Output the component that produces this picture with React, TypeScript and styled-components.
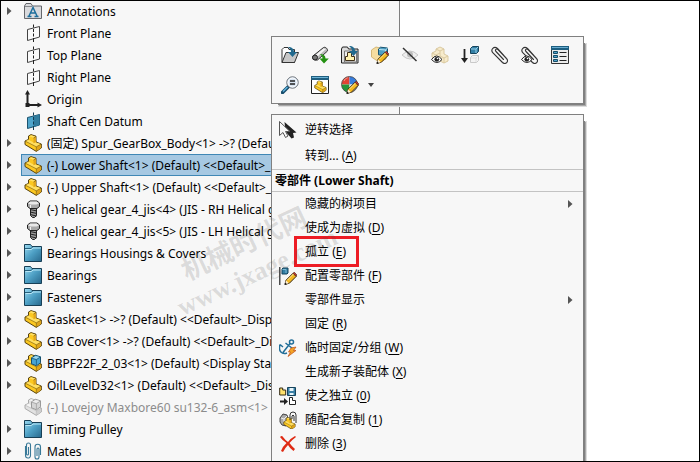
import React from "react";
import styled, { createGlobalStyle } from "styled-components";

const GlobalStyle = createGlobalStyle`
  * { box-sizing: border-box; }
  body {
    margin: 0;
    background: #fff;
    color: #000;
    font-family: "Noto Sans", "Noto Sans CJK SC", sans-serif;
    font-size: 12px;
    line-height: 22px;
  }
  button {
    margin: 0;
    padding: 0;
    border: 0;
    background: none;
    color: inherit;
    font: inherit;
  }
  ul { margin: 0; padding: 0; list-style: none; }
`;

const Workspace = styled.main`
  position: relative;
  display: grid;
  grid-template-columns: 4fr 3fr;
  height: 100vh;
  overflow: hidden;
  background: #fff;
  &::after {
    content: "";
    position: absolute;
    inset: 0;
    z-index: 5;
    border: 1px solid #000;
    pointer-events: none;
  }
`;

const TreePanel = styled.nav`
  min-width: 0;
  overflow: hidden;
  background: #f7f7f7;
  border-right: 1px solid #808080;
  padding-left: 3px;
`;

const TreeRow = styled.li`
  display: flex;
  height: 22px;
  align-items: center;
`;

const Expander = styled.button`
  display: flex;
  flex: none;
  width: 18px;
  height: 22px;
  align-items: center;
  padding-left: 4px;
`;

const Node = styled.div<{ $selected?: boolean; $muted?: boolean }>`
  display: flex;
  flex: 1;
  min-width: 0;
  height: 22px;
  align-items: center;
  gap: 5px;
  padding-left: 2px;
  border: 1px solid ${(p) => (p.$selected ? "#3f87b5" : "transparent")};
  background: ${(p) => (p.$selected ? "#a6c8e2" : "transparent")};
  color: ${(p) => (p.$muted ? "#8c8c8c" : "#000")};
`;

const NodeLabel = styled.span`
  padding-top: 2px;
  white-space: nowrap;
`;

const Popup = styled.div`
  position: absolute;
  left: 271px;
  width: 313px;
  background: #f7f7f7;
  border: 1px solid #808080;
  box-shadow: 4px 4px 0 -3px #808080, 5px 5px 0 -3px #a8a8a8, 5px 5px 0 -2px #dcdcdc;
`;

const Toolbar = styled(Popup)`
  top: 36px;
  display: flex;
  flex-wrap: wrap;
  padding: 3px;
`;

const ToolButton = styled.button<{ $narrow?: boolean }>`
  display: flex;
  width: ${(p) => (p.$narrow ? "12px" : "30px")};
  height: 30px;
  align-items: center;
  justify-content: center;
`;

const Menu = styled(Popup)`
  top: 114px;
  padding: 2px 0 12px;
`;

const MenuItem = styled.button<{ $tall?: boolean }>`
  position: relative;
  display: grid;
  grid-template-columns: 18px 1fr 5px;
  column-gap: 8px;
  width: 100%;
  height: ${(p) => (p.$tall ? "26px" : "24px")};
  align-items: center;
  padding: 0 10px 0 7px;
  text-align: left;
`;

const MenuHeading = styled.h2`
  margin: 0;
  padding-left: 3px;
  border: solid #c3c3c3;
  border-width: 1px 0;
  font-size: 12px;
  line-height: 21px;
`;

const IconSlot = styled.span`
  display: flex;
`;

const Key = styled.u`
  text-underline-offset: 2px;
`;

const Highlight = styled.span`
  position: absolute;
  left: 22px;
  top: -4px;
  width: 65px;
  height: 31px;
  border: 3px solid #ed1c24;
  pointer-events: none;
`;

const Watermark = styled.div`
  position: absolute;
  left: 164px;
  top: 226px;
  z-index: 4;
  color: rgba(70, 70, 70, 0.16);
  font-size: 27px;
  font-weight: 700;
  line-height: 32px;
  text-align: center;
  white-space: nowrap;
  transform: rotate(-25deg);
  pointer-events: none;
`;

const WatermarkUrl = styled.div`
  font-family: "Liberation Serif", serif;
  font-size: 26px;
`;

const Svg = ({ children }: { children: React.ReactNode }) => (
  <svg width="18" height="18" viewBox="0 0 18 18" fill="none" aria-hidden="true">
    {children}
  </svg>
);

const Arrow = () => (
  <svg width="5" height="8" viewBox="0 0 5 8" aria-hidden="true">
    <path d="M0 0 4.500 4 0 8Z" fill="#555" />
  </svg>
);

const PartShape = ({ pale, line = "#57420f" }: { pale?: boolean; line?: string }) => (
  <g strokeLinejoin="round">
    <path d="M4.500 2 7 .6 12 2.200V8l5.300 2v4l-5 3.400L1 10.500V7l3.500-1.600Z" fill={pale ? "#e2e2e2" : "#fcc820"} stroke={line} />
    <path d="m5 2.200 2.200-1 4.300 1.300-2 1.200ZM1.800 7l3-1.200 4.500 2.700L12 8.500l4.600 1.600-4.200 2.600Z" fill={pale ? "#f4f4f4" : "#ffdf62"} />
    <path d="M9.500 4 12 2.600V8L9.500 9.300ZM12.500 13l4.500-2.700V14l-4.500 3Z" fill={pale ? "#cfcfcf" : "#e0a51b"} />
    <path d="M9.500 4 12 2.500M1.500 7.300l10.800 5.500v4.300m0-4.300 4.800-2.700" stroke={line} strokeWidth=".5" />
  </g>
);

const Part = () => <Svg><PartShape /></Svg>;

const Assembly = ({ pale }: { pale?: boolean }) => (
  <Svg>
    <PartShape pale={pale} line={pale ? "#aaa" : "#57420f"} />
    <path d="m7.500 3.800 4-2.500 5 1.500v6l-4 3-5-2Z" fill={pale ? "#d5d5d5" : "#48a5d3"} stroke={pale ? "#999" : "#16506e"} />
    <path d="m8 3.900 3.600-2 4.200 1.200-3.500 2Z" fill={pale ? "#eee" : "#a0d8ef"} />
    <path d="m7.800 4.200 4.600 1.500v5.700m0-5.700 3.900-2.600" stroke={pale ? "#999" : "#16506e"} strokeWidth=".7" />
  </Svg>
);

const Folder = () => (
  <Svg>
    <defs>
      <linearGradient id="folder" x1="0" y1="0" x2="1" y2="1">
        <stop stopColor="#9ad9f0" /><stop offset=".5" stopColor="#4d9fc4" /><stop offset="1" stopColor="#28688c" />
      </linearGradient>
    </defs>
    <path d="M.5 17.500V.5h6L8 2.500h9.500v15Z" fill="url(#folder)" stroke="#173f56" />
    <path d="M1 4.500h6L8.500 3" stroke="#27617e" />
    <path d="M1.500 5.500h6L9 4h8" stroke="#b8e6f5" />
  </Svg>
);

const Annotation = () => (
  <Svg>
    <path d="M.5 16.500V4L2 1.500h5L8.500 4h9v12.500Z" fill="#d9dadd" stroke="#65676c" />
    <path d="M1 4.500h7" stroke="#85878b" />
    <path d="m5 14 4-8.500 4 8.500M6.500 11h5M3.500 14.500h4m3 0h4" stroke="#1d6e9c" strokeWidth="1.500" />
  </Svg>
);

const Plane = ({ solid }: { solid?: boolean }) => (
  <Svg>
    <path d="m3.500 5.500 12-3v10.500l-12 3.500Z" fill={solid ? "#4fa5cb" : "#fafafa"} stroke={solid ? "#1d536e" : "#444"} />
    {solid && <path d="m9.500 4 6-1.500V13l-6 2Z" fill="#317d9f" />}
    <path d="M9.500 .5v3m0 1.500v3m0 1.500v3m0 1.500v4" stroke={solid ? "#123b50" : "#222"} />
  </Svg>
);

const Origin = () => (
  <Svg>
    <path d="M3.500 3v12h12" stroke="#222" strokeWidth="2" />
    <path d="M3.500 0 6 4.500H1ZM18 15l-4.500-2.500v5Z" fill="#222" /><path d="M1.500 13h4v4h-4Z" fill="#222" />
  </Svg>
);

const Bolt = () => (
  <Svg>
    <path d="M6.500 7h6v8.500l-2 2h-2l-2-2Z" fill="#999" stroke="#222" />
    <path d="m6 9.500 7 1.500m-7 1 7 1.500m-7 1 6.500 1.500" stroke="#222" />
    <path d="M3.500 3 6 1h7l2.500 2v3.500L13 8.500H6L3.500 6.500Z" fill="#a8a8a8" stroke="#222" />
    <path d="M4 3.200 6.300 1.500h6.400L15 3.200l-2.500 1.300h-6Z" fill="#e9e9e9" /><path d="M6.500 5v3" stroke="#eee" />
  </Svg>
);

const Mates = () => (
  <Svg>
    <g stroke="#397998" strokeWidth="1.100">
      <path d="M1.500 4v9.500a2.500 2.500 0 0 0 5 0V3a2 2 0 0 0-4 0v9a1 1 0 0 0 2 0V5" />
      <path d="M16.500 13V5a2.700 2.700 0 0 0-5.500 0v10a2 2 0 0 0 4 0V7a1 1 0 0 0-2 0v7" />
    </g>
  </Svg>
);

const BlueArrow = () => <path d="M7 1c4 0 6 2 6 5h3l-4.500 5L7 6h3c0-2-1-3.500-3-5Z" fill="#226a8e" />;

const OpenPart = () => (
  <Svg>
    <path d="M1 16.500V3.500l2-2h4l1 2h5.500v13Z" fill="#fff" stroke="#333" />
    <path d="m1 16.500 4-10h12.500l-4 10Z" fill="#c8c8c8" stroke="#333" /><BlueArrow />
  </Svg>
);

const Roll = () => (
  <Svg>
    <path d="M2 10 12.500 1.500c2-1 4.500 1.500 4 3.500L6.500 14c-3 1-6-2-4.500-4Z" fill="#bbb" stroke="#333" />
    <path d="m4 9.500 8.500-7 2.500.5-9 8" fill="#f4f4f4" /><ellipse cx="4" cy="11.500" rx="2.500" ry="2.500" fill="#777" stroke="#222" />
    <path d="M8.500 8c4 0 6 1.500 6 4.500h3.300L13 17.500 8.500 12.500h3c0-2-1-3.500-3-4.500Z" fill="#249112" />
  </Svg>
);

const AssemblyFolder = () => (
  <Svg>
    <path d="M.5 17V3l1-2h5l1 2h9.500v14Z" fill="#ddd" stroke="#222" /><path d="M3.500 16V5h12v11Z" fill="#eee" stroke="#777" />
    <path d="M6.500 6.500h4v4h3v4h-9v-4h2Z" fill="#fff3b0" stroke="#403018" /><g transform="translate(1 -1)"><BlueArrow /></g>
  </Svg>
);

const Pencil = () => (
  <>
    <path d="m6 17.300 1-4 7-7 3.300 3-7 7Z" fill="#f5b920" stroke="#34230a" />
    <path d="m14 6.300 1.200-1.200 2.700 2.900-1 1.200Z" fill="#c93c30" stroke="#402018" strokeWidth=".6" />
    <path d="m6 17.300 1-4 2.800 3Z" fill="#fff0d0" /><path d="m5.500 18 .7-2.500 1.800 1.700Z" fill="#111" /><path d="m8.500 13 6-6" stroke="#ffeaa0" />
  </>
);

const EditPart = () => (
  <Svg>
    <path d="M.5 4 5 1l4 1v5l6 2v4l-7 3-7.500-5Z" fill="#f5dda0" stroke="#d5b878" />
    <path d="m7.500 3 2-1.800 7 .8v6l-2 1.800-7-1Z" fill="#4e9fc5" stroke="#185470" /><path d="m8 3.500 6.500.5v5M14.500 4l2-2" stroke="#bce4f0" /><Pencil />
  </Svg>
);

const HideEye = () => (
  <Svg>
    <path d="M1 9q8-8 16 0-8 8-16 0Z" fill="#eee" stroke="#c7c7c7" /><circle cx="9" cy="8.500" r="3" fill="#bbb" />
    <path d="m2 2 13.500 13" stroke="#333" strokeWidth="1.500" />
  </Svg>
);

const Eye = () => (
  <>
    <path d="M.5 13.500q5-7 10.500 0-5 6-10.500 0Z" fill="#fff" stroke="#222" /><circle cx="5.800" cy="13.300" r="2.400" fill="#222" /><circle cx="6.500" cy="12.500" r=".8" fill="#fff" />
  </>
);

const Transparency = () => (
  <Svg>
    <path d="m5 3 4-2 4 2v5l4 2v5l-4 2-12-6V7l4-2Z" fill="#f7ebcb" stroke="#dac9a0" />
    <path d="m5 3 4 2 4-2M9 5v5l4 2 4-2m-4 2v5M1 7l4 2 4-2" stroke="#dac9a0" /><Eye />
  </Svg>
);

const MoveDown = () => (
  <Svg>
    <path d="M3.500 3v11" stroke="#222" strokeWidth="1.800" /><path d="M0 12h7l-3.500 5Z" fill="#222" />
    <path d="m9.500 2.500 2-2h6v5l-2 2h-6Z" fill="#327fa5" stroke="#17445c" /><path d="M10 3h5v4M15 3l2-2" stroke="#96d0e8" />
    <path d="m9.500 11.500 2-2h6v5l-2 2h-6Z" fill="#f3f3f3" stroke="#c9c9c9" /><path d="M10 12h5v4M15 12l2-2" stroke="#ddd" />
  </Svg>
);

const ClipPath = () => (
  <path
    d="M12.500 13.500 5 5.500C3.500 4 5.500 2 7 3.500l8.500 9c3 3-1.200 6.500-4 4L2 7C-1 3.500 3 -.5 6.500 2.500l6.500 7"
    stroke="#333"
    strokeWidth="1.100"
    strokeLinecap="round"
  />
);
const Clip = () => <Svg><ClipPath /></Svg>;
const ClipEye = () => <Svg><ClipPath /><Eye /></Svg>;

const Properties = () => (
  <Svg>
    <path d="M.5 .5h17v17H.5Z" fill="#ececec" stroke="#333" /><path d="M0 0h18v4H0Z" fill="#1c5e80" /><path d="M1 1.500h16" stroke="#68acd0" />
    <path d="M2.500 5.500h4v2h-4Zm0 4h4v2h-4Zm0 4h4v2h-4Z" fill="#4aa1ca" stroke="#174c67" />
    <path d="M8.500 6.500h7m-7 4h7m-7 4h7" stroke="#222" />
  </Svg>
);

const ZoomTo = () => (
  <Svg>
    <path d="m1.500 16.500 6-6" stroke="#174e6d" strokeWidth="3.500" strokeLinecap="round" /><path d="m2 15.500 4.500-4.500" stroke="#62b4df" strokeWidth="1.400" />
    <circle cx="11.500" cy="6.500" r="5.700" fill="#d9e5f2" stroke="#656b72" /><circle cx="11.500" cy="6.500" r="4.500" stroke="#fff" />
    <path d="M9 5h5M9 8h5" stroke="#222" strokeWidth="1.600" />
  </Svg>
);

const PreviewWindow = () => (
  <Svg>
    <path d="M.5 .5h17v17H.5Z" fill="#fff" stroke="#222" /><path d="M0 0h18v4H0Z" fill="#1f5f80" /><path d="M1 1.500h16" stroke="#6bb3d6" />
    <g transform="translate(3 4.500) scale(.7)"><PartShape /></g>
  </Svg>
);

const Appearance = () => (
  <Svg>
    <path d="M8.500 8.500V.5a8 8 0 0 0-8 8Z" fill="#e14335" />
    <path d="M8.500 .5a8 8 0 0 1 8 8h-8Z" fill="#377ddd" /><path d="M.5 8.500h8v8a8 8 0 0 1-8-8Z" fill="#24953b" />
    <path d="M8.500 8.500h8a8 8 0 0 1-8 8Z" fill="#ddd" /><path d="M3 5q1-3 4-3.500" stroke="#ff9c8e" /><circle cx="8.500" cy="8.500" r="8" stroke="#444" strokeWidth=".8" /><Pencil />
  </Svg>
);

const Cursor = () => (
  <Svg>
    <path d="m5.500 1 12 10.500-3.500.5 1 4.500-2.500 1-6-7Z" fill="#222" />
    <path d="M.5 .5v14L4 11.500l2.500 5 2.500-1.500-2.500-4.500h4.500Z" fill="#f7f7f7" stroke="#555" />
  </Svg>
);

const Configure = () => (
  <Svg>
    <path d="M.8 0v18" stroke="#222" strokeWidth="1.200" /><path d="m3 2 1-1h5v5L8 7H3Z" fill="#337fa5" stroke="#17465f" /><path d="M3.500 2.500H7V6" stroke="#7fbbd5" /><Pencil />
  </Svg>
);

const Anchor = () => (
  <Svg>
    <g stroke="#236f99" strokeWidth="1.500"><circle cx="12.500" cy="3" r="2" /><path d="m11 4.500-7 9M6.500 4l7 5.500M1 6c-2 6 2 10 7 8M1 5.500-.5 9M1 5.500 4 8" /></g>
    <path d="m12 9 5-1-2.500 3.500H17l-8 6 2.500-4.500H9.500Z" fill="#f4a426" stroke="#bd4c16" strokeWidth=".7" />
  </Svg>
);

const Independent = () => (
  <Svg>
    <path d="M.7 1h3v2h3v5h-6Z" fill="#ffe16b" stroke="#302814" /><path d="M8.500 .5h8v8h-8Z" fill="#3a80a6" stroke="#17445c" /><path d="M10.500 1h4v3h-4Zm0 5h4v2h-4Z" fill="#e9f5fa" />
    <path d="M1 14.500h5" stroke="#222" strokeWidth="2" /><path d="m5 11 4 3.500L5 18Z" fill="#222" /><path d="M10.500 10.500h3v3h3v4h-6Z" fill="#fff" stroke="#222" />
  </Svg>
);

const CopyMates = () => (
  <Svg>
    <path d="m1 7 3-4 4 1 1 4-2 7-4-1-2-3Z" fill="#aaa" stroke="#444" /><path d="m2 7 3 1 3-3M5 8v5" stroke="#eee" />
    <g transform="translate(4 6) scale(.7)"><PartShape /></g>
    <path d="M11 9V4a2.500 2.500 0 0 1 6 0v8M13 8V5q1-2 2 0v5" stroke="#333" />
  </Svg>
);

const Delete = () => (
  <Svg><path d="M1 2q2-2 3 0 3 4 5 5 3-4 7-6l1 1q-4 3-6.500 6 2 3 5.500 6l-1.500 2q-4-3-5.500-6-3 3-5 7l-2-1q2-5 5.500-8Q3 5 1 2Z" fill="#df2b14" /></Svg>
);

type TreeEntry = { icon: React.ReactNode; label: string; leaf?: boolean; selected?: boolean; muted?: boolean };

const tree: TreeEntry[] = [
  { icon: <Annotation />, label: "Annotations" },
  { icon: <Plane />, label: "Front Plane", leaf: true },
  { icon: <Plane />, label: "Top Plane", leaf: true },
  { icon: <Plane />, label: "Right Plane", leaf: true },
  { icon: <Origin />, label: "Origin", leaf: true },
  { icon: <Plane solid />, label: "Shaft Cen Datum", leaf: true },
  { icon: <Part />, label: "(固定) Spur_GearBox_Body<1> ->? (Default)" },
  { icon: <Part />, label: "(-) Lower Shaft<1> (Default) <<Default>_D", selected: true },
  { icon: <Part />, label: "(-) Upper Shaft<1> (Default) <<Default>_D" },
  { icon: <Bolt />, label: "(-) helical gear_4_jis<4> (JIS - RH Helical gear" },
  { icon: <Bolt />, label: "(-) helical gear_4_jis<5> (JIS - LH Helical gear" },
  { icon: <Folder />, label: "Bearings Housings & Covers" },
  { icon: <Folder />, label: "Bearings" },
  { icon: <Folder />, label: "Fasteners" },
  { icon: <Part />, label: "Gasket<1> ->? (Default) <<Default>_Display" },
  { icon: <Part />, label: "GB Cover<1> ->? (Default) <<Default>_Display" },
  { icon: <Assembly />, label: "BBPF22F_2_03<1> (Default) <Display State" },
  { icon: <Part />, label: "OilLevelD32<1> (Default) <<Default>_Display" },
  { icon: <Assembly pale />, label: "(-) Lovejoy Maxbore60 su132-6_asm<1>", leaf: true, muted: true },
  { icon: <Folder />, label: "Timing Pulley" },
  { icon: <Mates />, label: "Mates" },
];

const tools: [string, React.ReactNode][] = [
  ["打开零件", <OpenPart />], ["退回", <Roll />], ["打开装配体", <AssemblyFolder />], ["编辑零件", <EditPart />],
  ["隐藏零部件", <HideEye />], ["更改透明度", <Transparency />], ["压缩", <MoveDown />], ["配合", <Clip />],
  ["查看配合", <ClipEye />], ["零部件属性", <Properties />], ["放大所选范围", <ZoomTo />], ["零部件预览窗口", <PreviewWindow />],
  ["外观", <Appearance />],
];

type Command = { label: string; hotkey?: string; icon?: React.ReactNode; submenu?: boolean; marked?: boolean };

const selectionCommands: Command[] = [
  { label: "逆转选择", icon: <Cursor /> },
  { label: "转到...", hotkey: "A" },
];

const componentCommands: Command[] = [
  { label: "隐藏的树项目", submenu: true },
  { label: "使成为虚拟", hotkey: "D" },
  { label: "孤立", hotkey: "E", marked: true },
  { label: "配置零部件", hotkey: "F", icon: <Configure /> },
  { label: "零部件显示", submenu: true },
  { label: "固定", hotkey: "R" },
  { label: "临时固定/分组", hotkey: "W", icon: <Anchor /> },
  { label: "生成新子装配体", hotkey: "X" },
  { label: "使之独立", hotkey: "0", icon: <Independent /> },
  { label: "随配合复制", hotkey: "1", icon: <CopyMates /> },
  { label: "删除", hotkey: "3", icon: <Delete /> },
];

const CommandItem = ({ command, tall }: { command: Command; tall?: boolean }) => (
  <MenuItem type="button" role="menuitem" $tall={tall}>
    <IconSlot>{command.icon}</IconSlot>
    <span>
      {command.label}
      {command.hotkey && <> (<Key>{command.hotkey}</Key>)</>}
    </span>
    {command.submenu && <Arrow />}
    {command.marked && <Highlight />}
  </MenuItem>
);

export default function App() {
  return (
    <>
      <GlobalStyle />
      <Workspace>
        <TreePanel>
          <ul>
            {tree.map((entry) => (
              <TreeRow key={entry.label}>
                <Expander type="button" aria-label={`Expand ${entry.label}`} disabled={entry.leaf}>
                  {!entry.leaf && <Arrow />}
                </Expander>
                <Node $selected={entry.selected} $muted={entry.muted}>
                  <IconSlot>{entry.icon}</IconSlot>
                  <NodeLabel>{entry.label}</NodeLabel>
                </Node>
              </TreeRow>
            ))}
          </ul>
        </TreePanel>
        <Toolbar role="toolbar">
          {tools.map(([name, icon]) => (
            <ToolButton key={name} type="button" aria-label={name}>{icon}</ToolButton>
          ))}
          <ToolButton type="button" aria-label="更多外观" $narrow>
            <svg width="6" height="4" viewBox="0 0 6 4" aria-hidden="true"><path d="M0 0h6L3 4Z" fill="#444" /></svg>
          </ToolButton>
        </Toolbar>
        <Menu role="menu">
          {selectionCommands.map((command) => <CommandItem key={command.label} command={command} tall />)}
          <MenuHeading>零部件 (Lower Shaft)</MenuHeading>
          {componentCommands.map((command) => <CommandItem key={command.label} command={command} />)}
        </Menu>
        <Watermark>
          机械时代网
          <WatermarkUrl>www.jxage.com</WatermarkUrl>
        </Watermark>
      </Workspace>
    </>
  );
}
